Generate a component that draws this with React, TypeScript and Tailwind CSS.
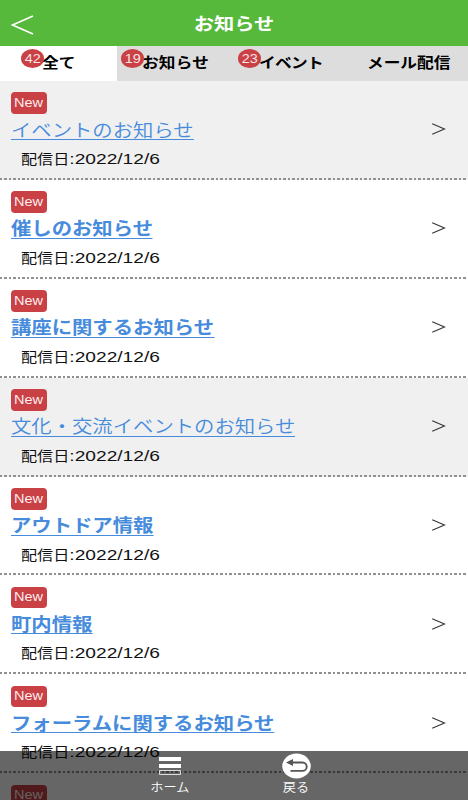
import clsx from 'clsx';

interface Tab {
  label: string;
  count?: number;
  active?: boolean;
  className: string;
}

interface Notice {
  title: string;
  date: string;
  read?: boolean;
}

const tabs: Tab[] = [
  { label: '全て', count: 42, active: true, className: 'pl-[42px]' },
  { label: 'お知らせ', count: 19, className: 'pl-[25px] tracking-[0.15px]' },
  { label: 'イベント', count: 23, className: 'pl-[25px] tracking-[-0.6px]' },
  { label: 'メール配信', className: 'pl-[16px]' },
];

const notices: Notice[] = [
  { title: 'イベントのお知らせ', date: '2022/12/6', read: true },
  { title: '催しのお知らせ', date: '2022/12/6' },
  { title: '講座に関するお知らせ', date: '2022/12/6' },
  { title: '文化・交流イベントのお知らせ', date: '2022/12/6', read: true },
  { title: 'アウトドア情報', date: '2022/12/6' },
  { title: '町内情報', date: '2022/12/6' },
  { title: 'フォーラムに関するお知らせ', date: '2022/12/6' },
  { title: 'イベントのお知らせ', date: '2022/12/6' },
];

const Header = () => (
  <header className="grid h-[46px] grid-cols-[60px_1fr_60px] items-center bg-[#57b93c] text-white">
    <svg className="mt-[3px] ml-[11px] h-5 w-[23px]" viewBox="0 0 23 20" fill="none" stroke="currentColor" strokeWidth="1.7">
      <path d="M22 1 1.5 10 22 19" />
    </svg>
    <h1 className="mt-1 origin-center scale-x-[1.15] text-center text-[17.6px] leading-none font-bold">お知らせ</h1>
  </header>
);

const TabBar = () => (
  <nav className="grid h-[35px] grid-cols-4 bg-[#ddd]">
    {tabs.map((tab) => (
      <div
        key={tab.label}
        className={clsx('relative flex items-center', tab.className, tab.active && 'bg-white')}
      >
        <span className="origin-left scale-x-[1.15] text-[14.5px] leading-none font-bold whitespace-nowrap text-black">
          {tab.label}
        </span>
        {tab.count && (
          <span
            className={clsx(
              'absolute top-[3px] flex h-[19px] w-[23px] items-center justify-center rounded-[50%] bg-[#c94045] text-[12px] leading-none tracking-normal text-[#f8e4e4]',
              tab.active ? 'left-[21px]' : 'left-1',
            )}
          >
            <span className="scale-x-[1.2]">{tab.count}</span>
          </span>
        )}
      </div>
    ))}
  </nav>
);

const NoticeRow = ({ notice }: { notice: Notice }) => (
  <li className={clsx('flex h-[98.9px] shrink-0 flex-col', notice.read ? 'bg-[#f0f0f0]' : 'bg-white')}>
    <div className="flex flex-1 items-center justify-between pr-[22px] pl-[11px]">
      <div className="flex flex-col items-start pt-px">
        <span className="flex h-[21.5px] w-9 items-center justify-center rounded-[4px] bg-[#c94045] text-[12.5px] leading-none text-[#fbeeee]">
          <span className="scale-x-[1.16]">New</span>
        </span>
        <a
          className={clsx(
            'mt-[5px] flex h-[21px] origin-left scale-x-[1.15] items-center border-b border-[#468bdc] pt-[5px] text-[17.7px] leading-none whitespace-nowrap text-[#468bdc]',
            notice.read ? 'font-[350]' : 'font-bold',
          )}
        >
          {notice.title}
        </a>
        <p className="mt-3 mb-px ml-[9.5px] origin-left scale-x-[1.15] text-[14px] leading-none whitespace-nowrap text-[#111]">
          配信日
          <span className="inline-block origin-left scale-x-[1.15] text-[14.5px] leading-none">:{notice.date}</span>
        </p>
      </div>
      <svg className="h-3 w-[14px]" viewBox="0 0 14 12" fill="none" stroke="#333" strokeWidth="1.1">
        <path d="M.2.7 12.5 6 .2 11.3" />
      </svg>
    </div>
    <div className="h-[2px] bg-[repeating-linear-gradient(90deg,#909090_0_2.2px,transparent_2.2px_4.5px)]" />
  </li>
);

const FooterMenu = () => (
  <footer className="absolute inset-x-0 bottom-0 flex h-[49px] bg-black/60 text-white">
    <div className="ml-[139px] flex w-[62px] flex-col items-center">
      <svg className="mt-[6px] h-[19px] w-[22px]" viewBox="0 0 22 19" fill="#fff">
        <path d="M0 0h22v4H0zM0 7h22v4H0z" />
        <path d="M.5 13.5h21v4H.5z" fill="none" stroke="#ddd" />
      </svg>
      <span className="mt-[6px] scale-x-[1.1] text-[12px] leading-none font-[350]">ホーム</span>
    </div>
    <div className="ml-[64px] flex w-[62px] flex-col items-center">
      <svg className="mt-[2px] h-[26px] w-[29px]" viewBox="0 0 29 26">
        <ellipse cx="14.5" cy="13" rx="14.3" ry="12.5" fill="#fff" />
        <path d="M10 9.5h10.5a4.2 4.2 0 0 1 0 8.4H8.5" fill="none" stroke="#555" strokeWidth="1.9" />
        <path d="M4 9.5 11 6v7z" fill="#555" />
      </svg>
      <span className="mt-[3px] scale-x-[1.1] text-[12px] leading-none font-[350]">戻る</span>
    </div>
  </footer>
);

export default function App() {
  return (
    <div className="relative flex h-[800px] w-[468px] flex-col overflow-hidden bg-white font-['Liberation_Sans','Noto_Sans_CJK_JP',sans-serif]">
      <Header />
      <TabBar />
      <ul className="flex flex-1 flex-col overflow-hidden">
        {notices.map((notice, i) => (
          <NoticeRow key={i} notice={notice} />
        ))}
      </ul>
      <FooterMenu />
    </div>
  );
}
